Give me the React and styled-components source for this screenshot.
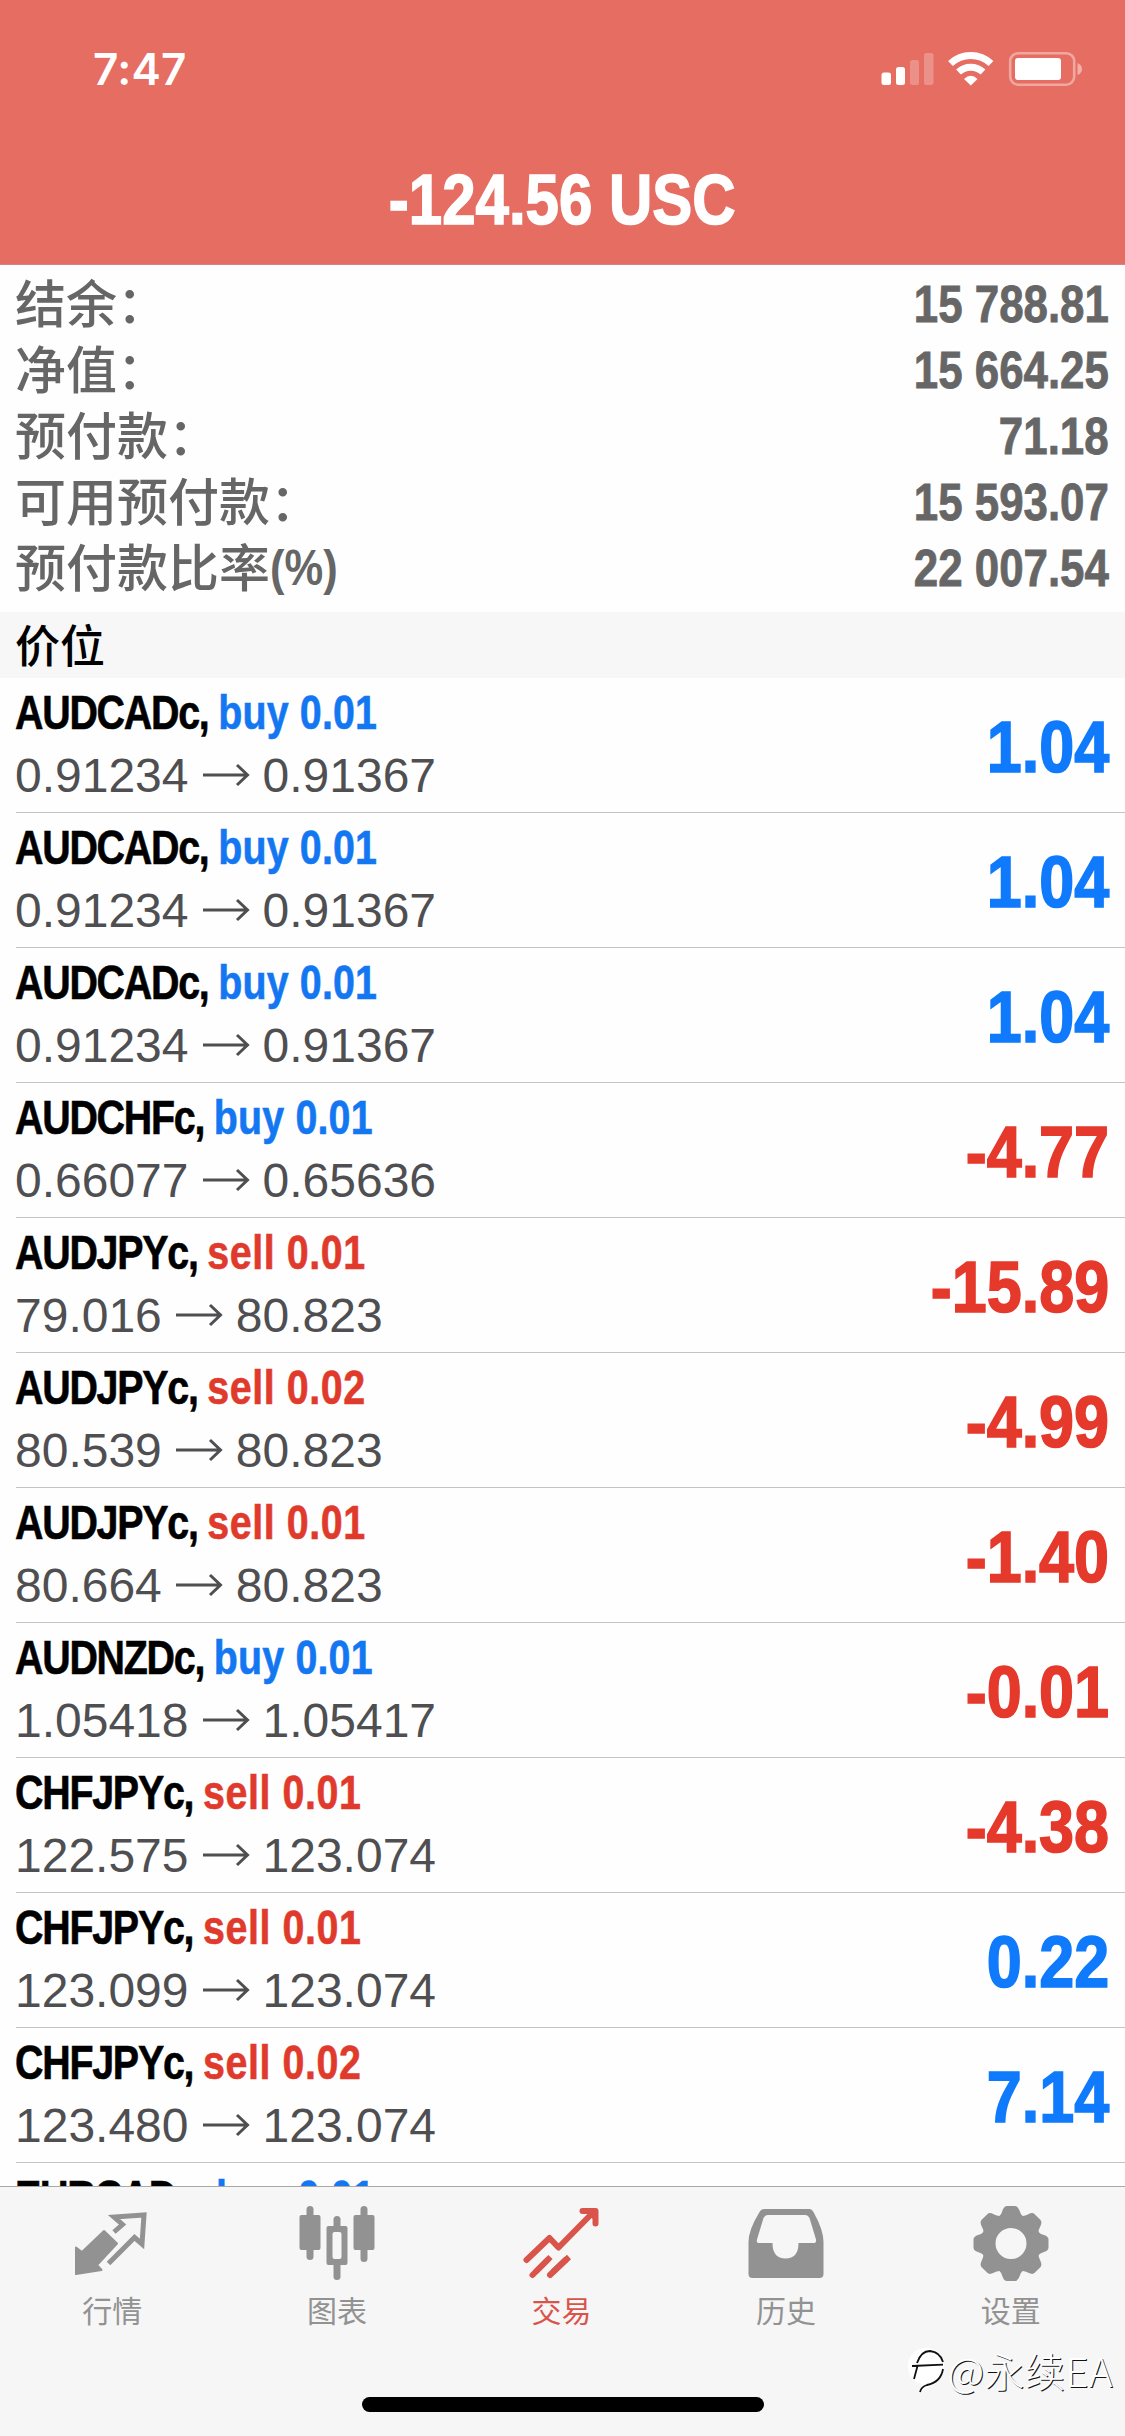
import React from 'react';
import styled, { createGlobalStyle } from 'styled-components';

const GlobalStyle = createGlobalStyle`
  * {
    box-sizing: border-box;
  }
  body {
    margin: 0;
    background: #fff;
    font-family: "Liberation Sans", "Noto Sans CJK SC", sans-serif;
  }
`;

const Screen = styled.div`
  display: flex;
  flex-direction: column;
  width: 1125px;
  height: 2436px;
  overflow: hidden;
  background: #fefefe;
`;

const Header = styled.header`
  flex: none;
  height: 265px;
  background: #e66d62;
  border-bottom: 1px solid #c98a84;
`;

const StatusBar = styled.div`
  display: flex;
  justify-content: space-between;
  height: 132px;
  padding: 41px 42px 0 93px;
`;

const Time = styled.div`
  font: 600 44px/56px Inter, sans-serif;
  letter-spacing: 0.3px;
  color: #fff;
`;

const StatusIcons = styled.svg`
  width: 202px;
  height: 36px;
  margin-top: 10px;
`;

// narrow bold face, made by squeezing the regular bold
const Condensed = styled.span`
  display: inline-block;
  font-family: "Liberation Sans", sans-serif;
  font-weight: 700;
  font-kerning: none;
  white-space: nowrap;
  -webkit-text-stroke: ${props => props.weight || 0}px currentColor;
  transform: scaleX(${props => props.scale});
  transform-origin: ${props => props.origin || 'left'} center;
`;

const Total = styled.h1`
  margin: 0;
  height: 132px;
  padding-top: 28px;
  text-align: center;
  font-size: 71px;
  line-height: 80px;
  color: #fff;
`;

const Summary = styled.section`
  flex: none;
  height: 347px;
  padding: 6px 16px 0 15px;
`;

const SummaryRow = styled.div`
  display: flex;
  justify-content: space-between;
  height: 66px;
  font-size: 51px;
  line-height: 66px;
  color: #666;
`;

const Label = styled.span`
  display: flex;
  height: 60px;
  font-family: "Noto Sans CJK SC", sans-serif;
  font-weight: 500;
  line-height: 60px;
`;

const Unit = styled(Condensed)`
  padding-top: 3px;
  font-size: 50px;
`;

const Value = styled(Condensed)`
  padding-top: 1px;
`;

const SectionTitle = styled.h2`
  flex: none;
  height: 66px;
  margin: 0;
  padding: 0 15px;
  background: #f7f7f7;
  font: 500 45px/64px "Noto Sans CJK SC", sans-serif;
  color: #000;
`;

const Positions = styled.ul`
  flex: 1;
  min-height: 0;
  margin: 0;
  padding: 0 0 0 16px;
  overflow: hidden;
  list-style: none;
`;

const Position = styled.li`
  display: flex;
  justify-content: space-between;
  height: 135px;
  padding-right: 16px;
  border-bottom: 1px solid #c4c4c4;
`;

const Details = styled.div`
  padding-top: 7px;
`;

const Symbol = styled(Condensed)`
  display: block;
  margin-left: -1px;
  font-size: 48px;
  line-height: 56px;
  letter-spacing: -1.5px;
  color: #000;
`;

const Order = styled.span`
  letter-spacing: ${props => (props.side === 'buy' ? 0.2 : 0.7)}px;
  color: ${props => (props.side === 'buy' ? '#1477f2' : '#e03a2d')};
`;

const Prices = styled.div`
  display: flex;
  align-items: center;
  gap: 13px;
  margin-top: 7px;
  margin-left: -1px;
  font-size: 48px;
  line-height: 56px;
  color: #4f4f52;

  svg {
    width: 48px;
    height: 24px;
    margin-top: -2px;
  }
`;

const Profit = styled(Condensed)`
  padding-top: 29px;
  font-size: 72px;
  line-height: 80px;
  color: ${props => (props.loss ? '#e5392b' : '#0f7afb')};
`;

const TabBar = styled.nav`
  position: relative;
  flex: none;
  display: flex;
  height: 250px;
  padding-right: 2px;
  background: #f6f6f6;
  border-top: 1px solid #a9a9a9;
`;

const Tab = styled.a`
  display: flex;
  flex: 1;
  flex-direction: column;
  align-items: center;
  padding-top: 15px;
  font: 400 30px/44px "Noto Sans CJK SC", sans-serif;
  color: ${props => (props.active ? '#d9544b' : '#929292')};

  svg {
    width: 84px;
    height: 84px;
    margin-bottom: 1px;
  }
`;

const HomeIndicator = styled.div`
  position: absolute;
  left: 362px;
  bottom: 24px;
  width: 402px;
  height: 15px;
  border-radius: 8px;
  background: #000;
`;

const Watermark = styled.div`
  position: absolute;
  right: 12px;
  bottom: 41px;
  display: flex;
  align-items: center;
  font: 300 40px/50px "Noto Sans CJK SC", sans-serif;
  letter-spacing: 0.5px;
  color: #fff;
  text-shadow: 1px 1px 0 #111;

  svg {
    width: 38px;
    height: 48px;
    margin-right: 3px;
  }
`;

const summary = [
  { label: '结余：', value: '15 788.81' },
  { label: '净值：', value: '15 664.25' },
  { label: '预付款：', value: '71.18' },
  { label: '可用预付款：', value: '15 593.07' },
  { label: '预付款比率', unit: '(%)', value: '22 007.54' },
];

const positions = [
  { symbol: 'AUDCADc', side: 'buy', volume: '0.01', open: '0.91234', current: '0.91367', profit: '1.04' },
  { symbol: 'AUDCADc', side: 'buy', volume: '0.01', open: '0.91234', current: '0.91367', profit: '1.04' },
  { symbol: 'AUDCADc', side: 'buy', volume: '0.01', open: '0.91234', current: '0.91367', profit: '1.04' },
  { symbol: 'AUDCHFc', side: 'buy', volume: '0.01', open: '0.66077', current: '0.65636', profit: '-4.77' },
  { symbol: 'AUDJPYc', side: 'sell', volume: '0.01', open: '79.016', current: '80.823', profit: '-15.89' },
  { symbol: 'AUDJPYc', side: 'sell', volume: '0.02', open: '80.539', current: '80.823', profit: '-4.99' },
  { symbol: 'AUDJPYc', side: 'sell', volume: '0.01', open: '80.664', current: '80.823', profit: '-1.40' },
  { symbol: 'AUDNZDc', side: 'buy', volume: '0.01', open: '1.05418', current: '1.05417', profit: '-0.01' },
  { symbol: 'CHFJPYc', side: 'sell', volume: '0.01', open: '122.575', current: '123.074', profit: '-4.38' },
  { symbol: 'CHFJPYc', side: 'sell', volume: '0.01', open: '123.099', current: '123.074', profit: '0.22' },
  { symbol: 'CHFJPYc', side: 'sell', volume: '0.02', open: '123.480', current: '123.074', profit: '7.14' },
  { symbol: 'EURCADc', side: 'buy', volume: '0.01' },
];

const QuotesIcon = () => (
  <svg viewBox="70 52 84 84" fill="none" stroke="currentColor" strokeWidth="5" strokeLinejoin="round">
    <path fill="currentColor" strokeWidth="2" d="M76 124V97.500L82 102L104 81L117 93.500L97 115L101.500 120Z" />
    <path strokeLinejoin="miter" d="M114 82L122.500 74.500L114 67L144 65L142 94L134.500 87.500L108.500 113.500" />
  </svg>
);

const ChartIcon = () => (
  <svg viewBox="294.500 52 84 84" fill="currentColor">
    <rect x="299" y="65" width="21" height="35" rx="2" />
    <rect x="306" y="56" width="7" height="54" rx="3.500" />
    <rect x="353" y="65" width="21" height="35" rx="2" />
    <rect x="360" y="56" width="7" height="56" rx="3.500" />
    <rect x="333" y="66" width="7" height="14" rx="3.500" />
    <rect x="333" y="110" width="7" height="20" rx="3.500" />
    <path fillRule="evenodd" d="M328 76h17a2 2 0 0 1 2 2v35a2 2 0 0 1-2 2h-17a2 2 0 0 1-2-2V78a2 2 0 0 1 2-2ZM334 82a2 2 0 0 0-2 2v23a2 2 0 0 0 2 2h5a2 2 0 0 0 2-2V84a2 2 0 0 0-2-2Z" />
  </svg>
);

const TradeIcon = () => (
  <svg viewBox="19.500 52 84 84" fill="none" stroke="currentColor" strokeWidth="6" strokeLinejoin="round">
    <path strokeLinecap="round" d="M27 110L50 88L59 97.500L93 63" />
    <path strokeLinecap="round" d="M83 61H96V73.500" />
    <path fill="currentColor" stroke="none" d="M86 61H96V72Z" />
    <path d="M51 107L36 122M69.500 107L53.500 122" />
    <path strokeLinecap="round" d="M48 110L33 125M66 110L50.500 125" />
  </svg>
);

const HistoryIcon = () => (
  <svg viewBox="244.500 52 84 84" fill="currentColor">
    <path fillRule="evenodd" d="M265 59H310Q312.500 59 314 62Q324 80 324 92V124Q324 128 320 128H253Q249 128 249 124V92Q249 80 260 62Q261.500 59 265 59ZM268 65H306Q308.500 65 310 68L316.500 89.500Q317 93 314 93H299Q299 108.500 286 108.500Q273 108.500 273 93H260Q256.500 93 257.500 89.500L264 68Q265.500 65 268 65Z" />
  </svg>
);

const SettingsIcon = () => (
  <svg viewBox="-42 -41.500 84 84">
    <g fill="currentColor">
      {[0, 45, 90, 135, 180, 225, 270, 315].map(angle => (
        <path key={angle} transform={`rotate(${angle})`} d="M-12 -27Q-9.500 -29 -8.500 -33Q-7 -37.500 -4 -37.500H4Q7 -37.500 8.500 -33Q9.500 -29 12 -27Z" />
      ))}
    </g>
    <circle r="22.500" fill="none" stroke="currentColor" strokeWidth="14" />
  </svg>
);

const tabs = [
  { label: '行情', icon: QuotesIcon },
  { label: '图表', icon: ChartIcon },
  { label: '交易', icon: TradeIcon, active: true },
  { label: '历史', icon: HistoryIcon },
  { label: '设置', icon: SettingsIcon },
];

const App = () => {
  return (
    <Screen>
      <GlobalStyle />
      <Header>
        <StatusBar>
          <Time>7:47</Time>
          <StatusIcons viewBox="881 51 202 36" fill="#fff">
            <rect x="881.500" y="72.500" width="9.500" height="12.500" rx="2.500" />
            <rect x="896" y="67" width="9" height="18" rx="2.500" />
            <rect x="910" y="60" width="9" height="25" rx="2.500" opacity=".25" />
            <rect x="924" y="53" width="9.500" height="32" rx="2.500" opacity=".25" />
            <g fill="none" stroke="#fff" strokeWidth="7">
              <path d="M950.500 63.500A29.500 29.500 0 0 1 991 63.500" />
              <path d="M958.500 72A18 18 0 0 1 983 72" />
            </g>
            <path d="M964 79Q970.800 72.500 977.500 79L970.800 85.500Z" />
            <rect x="1010.200" y="53.200" width="64" height="31.500" rx="8" fill="none" stroke="#fff" strokeWidth="2.600" opacity=".4" />
            <rect x="1015" y="58" width="46" height="22" rx="3" />
            <path d="M1077.500 63Q1082 65 1082 69Q1082 73 1077.500 75Z" opacity=".45" />
          </StatusIcons>
        </StatusBar>
        <Total>
          <Condensed scale={0.845} weight={1.6} origin="center">-124.56 USC</Condensed>
        </Total>
      </Header>

      <Summary>
        {summary.map(row => (
          <SummaryRow key={row.label}>
            <Label>
              {row.label}
              {row.unit && <Unit scale={0.87}>{row.unit}</Unit>}
            </Label>
            <Value scale={0.86} weight={0.8} origin="right">{row.value}</Value>
          </SummaryRow>
        ))}
      </Summary>

      <SectionTitle>价位</SectionTitle>
      <Positions>
        {positions.map((item, i) => (
          <Position key={i}>
            <Details>
              <Symbol scale={0.82} weight={0.6}>
                {item.symbol}, <Order side={item.side}>{item.side} {item.volume}</Order>
              </Symbol>
              {item.open && (
                <Prices>
                  {item.open}
                  <svg viewBox="0 0 48 24" fill="none" stroke="currentColor" strokeWidth="3">
                    <path d="M1 12H45M35 2L45.500 12L35 22" />
                  </svg>
                  {item.current}
                </Prices>
              )}
            </Details>
            {item.profit && (
              <Profit scale={0.874} weight={1.6} origin="right" loss={item.profit < 0 ? 1 : 0}>
                {item.profit}
              </Profit>
            )}
          </Position>
        ))}
      </Positions>

      <TabBar>
        {tabs.map(({ label, icon: Icon, active }) => (
          <Tab key={label} active={active ? 1 : 0}>
            <Icon />
            {label}
          </Tab>
        ))}
        <HomeIndicator />
        <Watermark>
          <svg viewBox="0 0 38 48" fill="none">
            <path fill="#fff" d="M19 2C30 2 37 10 37 21C37 33 27 39 13 46L15 38C6 36 1 30 1 20C1 9 9 2 19 2Z" />
            <path stroke="#111" strokeWidth="1.800" d="M10 17Q14 5 23 5Q33 6 36 16M5 20L36 18.700M10.500 20L7 33M36 23Q34 36 20 39Q14 41 13 46" />
          </svg>
          @永续EA
        </Watermark>
      </TabBar>
    </Screen>
  );
};

export default App;
